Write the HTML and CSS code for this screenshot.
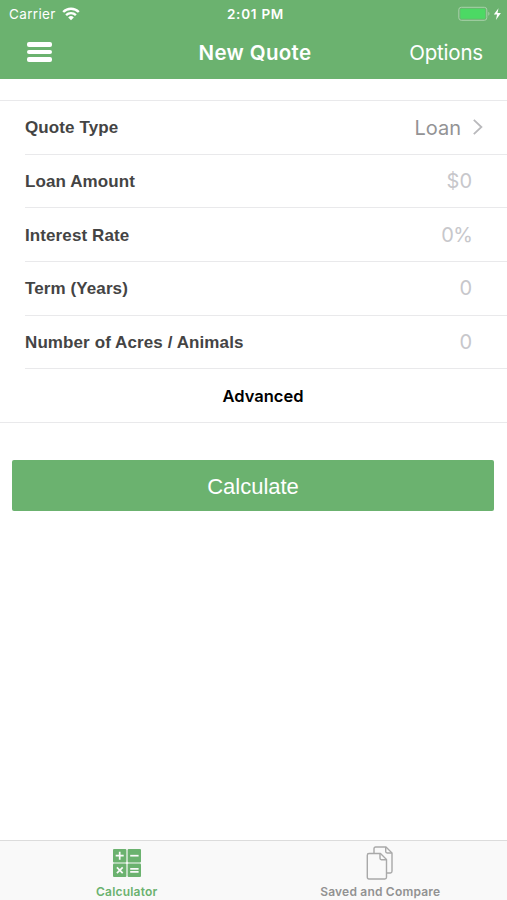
FILE: index.html
```html
<!DOCTYPE html>
<html lang="en">
<head>
  <meta charset="UTF-8">
  <meta name="viewport" content="width=device-width, initial-scale=1.0">
  <title>New Quote</title>
  <link rel="stylesheet" href="styles.css">
</head>
<body>

  <header class="header">
    <div class="status-bar">
      <div class="carrier">
        <span class="carrier-name">Carrier</span>
        <svg class="wifi" width="18" height="14" viewBox="0 0 18 14" fill="none" stroke="#fff" stroke-width="2.4">
          <path d="M1.2 5a11 11 0 0 1 15.6 0"/>
          <path d="M4.1 8.1a7 7 0 0 1 9.8 0"/>
          <path d="M9 13.2L6.2 10.4a4 4 0 0 1 5.6 0z" fill="#fff" stroke="none"/>
        </svg>
      </div>
      <div class="time">2:01 PM</div>
      <div class="battery">
        <svg width="44" height="16" viewBox="0 0 44 16">
          <rect x=".8" y="1.3" width="28" height="13" rx="2.5" fill="none" stroke="#a9d1ab"/>
          <rect x="2.3" y="2.8" width="25" height="10" rx="1" fill="#4cd964"/>
          <path d="M30.3 5.8a2.3 2.3 0 0 1 0 4z" fill="#a9d1ab"/>
          <path d="M40.5 2.2L35.8 8.6h3.3l-1.2 5.3 5-6.9h-3.4z" fill="#fff"/>
        </svg>
      </div>
    </div>
    <div class="nav-bar">
      <button class="menu-btn" aria-label="Menu">
        <span></span>
        <span></span>
        <span></span>
      </button>
      <h1 class="title">New Quote</h1>
      <button class="options-btn">Options</button>
    </div>
  </header>

  <main class="content">
    <form class="quote-form">
      <div class="row">
        <span class="label">Quote Type</span>
        <span class="value selected">Loan</span>
        <svg class="chevron" width="12" height="18" viewBox="0 0 12 18" fill="none" stroke="#b9b9bc" stroke-width="1.8">
          <path d="M1.8 1.8L9.4 9l-7.6 7.2"/>
        </svg>
      </div>
      <div class="row">
        <span class="label">Loan Amount</span>
        <span class="value">$0</span>
      </div>
      <div class="row">
        <span class="label">Interest Rate</span>
        <span class="value percent">0%</span>
      </div>
      <div class="row">
        <span class="label">Term (Years)</span>
        <span class="value">0</span>
      </div>
      <div class="row">
        <span class="label">Number of Acres / Animals</span>
        <span class="value">0</span>
      </div>
      <div class="row advanced">Advanced</div>
    </form>
    <button class="calculate-btn">Calculate</button>
  </main>

  <nav class="tab-bar">
    <a class="tab active">
      <svg width="30" height="30" viewBox="0 0 30 30">
        <g fill="#6bb26f">
          <rect x="1" y="1" width="13.4" height="13.4" rx="1"/>
          <rect x="15.6" y="1" width="13.4" height="13.4" rx="1"/>
          <rect x="1" y="15.6" width="13.4" height="13.4" rx="1"/>
          <rect x="15.6" y="15.6" width="13.4" height="13.4" rx="1"/>
        </g>
        <g fill="none" stroke="#f9f9f9" stroke-width="1.7">
          <path d="M3.7 7.7h8M7.7 3.7v8"/>
          <path d="M18.2 7.7h8.4"/>
          <path d="M4.9 19.4l5.8 5.8M10.7 19.4l-5.8 5.8"/>
          <path d="M18.2 20.9h8.4M18.2 23.8h8.4"/>
        </g>
      </svg>
      <span>Calculator</span>
    </a>
    <a class="tab">
      <svg width="28" height="34" viewBox="0 0 28 34" fill="none" stroke="#a9a9a9" stroke-width="1.4" stroke-linejoin="round">
        <path d="M8 7.3V2.7Q8 1 9.7 1H20l6 6v18.3q0 1.7-1.7 1.7H21"/>
        <path d="M19.7 1v4.6q0 1.4 1.4 1.4H26"/>
        <path d="M3 7.5h11.5l6 6v17.8q0 1.7-1.7 1.7H3q-1.7 0-1.7-1.7V9.2Q1.3 7.5 3 7.5z"/>
        <path d="M14 7.5v4.8q0 1.4 1.4 1.4h5"/>
      </svg>
      <span>Saved and Compare</span>
    </a>
  </nav>

</body>
</html>
```
FILE: styles.css
```css
* {
  box-sizing: border-box;
}

body {
  margin: 0;
  height: 100vh;
  display: flex;
  flex-direction: column;
  background: #fff;
  font-family: Inter, sans-serif;
}

button {
  border: none;
  background: none;
  padding: 0;
  color: #fff;
  cursor: pointer;
}

/* Header */
.header {
  height: 79px;
  background: #6bb26f;
  color: #fff;
}

.status-bar,
.nav-bar {
  display: grid;
  grid-template-columns: 1fr auto 1fr;
  align-items: center;
}

.status-bar {
  height: 27px;
  padding: 0 5px 0 9px;
  font-size: 13.5px;
}

.carrier {
  display: flex;
  align-items: center;
  gap: 6px;
}

.carrier-name {
  letter-spacing: 0.35px;
}

.time {
  font-weight: 600;
  letter-spacing: 0.75px;
}

.battery {
  display: flex;
  justify-content: flex-end;
}

.nav-bar {
  height: 50px;
  padding: 0 24px 0 27px;
}

.menu-btn {
  width: 25px;
  display: flex;
  flex-direction: column;
  gap: 3px;
}

.menu-btn span {
  height: 4.5px;
  border-radius: 2px;
  background: #fff;
}

.title {
  margin: 0;
  font-size: 20.5px;
  font-weight: 600;
  letter-spacing: 0.35px;
}

.options-btn {
  justify-self: end;
  font-family: Inter, sans-serif;
  font-size: 20.5px;
  letter-spacing: -0.2px;
}

/* Form */
.content {
  flex: 1;
  padding-top: 21px;
}

.quote-form {
  border-top: 1px solid #e9e9eb;
  border-bottom: 1px solid #e9e9eb;
}

.row {
  display: flex;
  align-items: center;
  height: 53.7px;
  margin-left: 25px;
  padding-right: 35px;
  border-bottom: 1px solid #e9e9eb;
}

.label {
  flex: 1;
  padding-top: 2px;
  color: #444;
  font-family: "Liberation Sans", Arial, sans-serif;
  font-size: 17px;
  font-weight: bold;
  letter-spacing: 0.1px;
}

.value {
  color: #c7c7cb;
  font-size: 20px;
}

.value.percent {
  letter-spacing: -0.8px;
}

.value.selected {
  padding-top: 1px;
  color: #939395;
}

.row:first-child {
  padding-right: 23px;
}

.chevron {
  margin-left: 11px;
}

.row.advanced {
  height: 53px;
  margin-left: 0;
  padding: 0 0 0 19px;
  justify-content: center;
  border-bottom: none;
  font-size: 16.5px;
  font-weight: 600;
}

.calculate-btn {
  display: block;
  width: calc(100% - 25px);
  height: 51px;
  margin: 37px 13px 0 12px;
  padding-top: 2px;
  border-radius: 2px;
  background: #6bb26f;
  font-family: "Liberation Sans", Arial, sans-serif;
  font-size: 22px;
}

/* Tab bar */
.tab-bar {
  display: flex;
  height: 60px;
  border-top: 1px solid #dcdcdc;
  background: #f9f9f9;
}

.tab {
  flex: 1;
  display: flex;
  flex-direction: column;
  align-items: center;
  justify-content: space-between;
  padding: 5px 0 1px;
  color: #929292;
  font-size: 12px;
  font-weight: 600;
  letter-spacing: 0.2px;
}

.tab.active {
  padding-top: 7px;
  color: #6bb26f;
}
```
